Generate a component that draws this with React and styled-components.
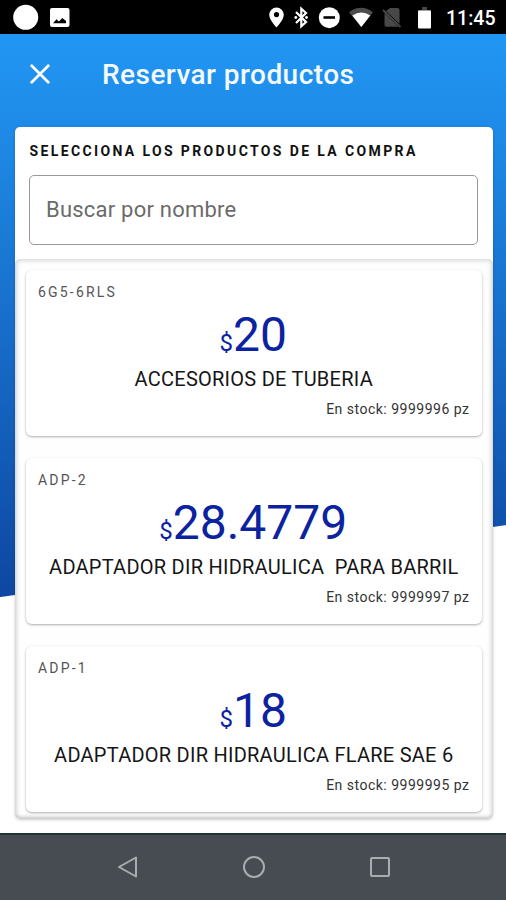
import React from "react";
import styled, { createGlobalStyle } from "styled-components";

const GlobalStyle = createGlobalStyle`
  * {
    box-sizing: border-box;
  }
  body {
    margin: 0;
    background: #fff;
    font-family: Roboto, "Noto Sans", sans-serif;
  }
  h1, h2, p {
    margin: 0;
  }
`;

const Screen = styled.div`
  display: flex;
  flex-direction: column;
  width: 506px;
  height: 900px;
  overflow: hidden;
`;

const StatusBar = styled.div`
  display: flex;
  align-items: center;
  justify-content: space-between;
  height: 34px;
  padding: 0 10px 0 13px;
  background: #000;
  color: #fff;
  svg {
    display: block;
  }
`;

const StatusGroup = styled.div`
  display: flex;
  align-items: center;
`;

const Clock = styled.span`
  width: 50px;
  margin-left: 13px;
  padding-top: 3px;
  font-size: 19.5px;
  font-weight: 500;
  line-height: 34px;
  white-space: nowrap;
`;

// slanted white bottom over the blue gradient
const Main = styled.main`
  display: flex;
  flex-direction: column;
  height: 799px;
  background: linear-gradient(171.9deg, transparent 557px, #fff 558px),
    linear-gradient(#2196f3 0, #1e88e5 110px, #0d47a1 563px);
`;

const Header = styled.header`
  display: flex;
  align-items: center;
  height: 93px;
  padding: 0 0 13px 30px;
  gap: 52px;
`;

const HeaderTitle = styled.h1`
  padding-top: 2px;
  color: #f4faff;
  font-size: 28px;
  font-weight: 500;
  line-height: 40px;
  letter-spacing: 0.45px;
`;

const Panel = styled.section`
  display: flex;
  flex-direction: column;
  width: 478px;
  height: 692px;
  margin-left: 14.5px;
  border-radius: 5px;
  background: #fff;
  overflow: hidden;
  box-shadow: 0 1px 3px rgba(0, 0, 0, 0.2);
`;

const SearchArea = styled.div`
  height: 132px;
  padding: 15px 14.5px 0;
`;

const SearchLabel = styled.h2`
  padding-left: 0.5px;
  font-size: 14px;
  font-weight: 700;
  line-height: 18px;
  letter-spacing: 2.37px;
  color: #111;
  white-space: nowrap;
`;

const SearchInput = styled.input`
  display: block;
  width: 449px;
  height: 70px;
  margin-top: 15px;
  padding: 0 16px 1px;
  border: 1px solid #999;
  border-radius: 5px;
  background: #fff;
  font-family: inherit;
  font-size: 22px;
  letter-spacing: 0.22px;
  outline: none;
  &::placeholder {
    color: #6b6b6b;
    opacity: 1;
  }
`;

const List = styled.div`
  display: flex;
  flex-direction: column;
  gap: 21px;
  height: 560px;
  padding: 11px 11px 0;
  border-radius: 5px;
  background: #fefefe;
  box-shadow: inset 0 -2px 3px rgba(0, 0, 0, 0.1),
    inset 0 0 4px 2px rgba(0, 0, 0, 0.14);
`;

const Card = styled.article`
  height: 166px;
  padding: 13px 12px 0 12.5px;
  border-radius: 6px;
  background: #fff;
  box-shadow: 0 1px 2.5px rgba(0, 0, 0, 0.32);
  & + & {
    margin-top: 1px;
  }
`;

const Code = styled.p`
  font-size: 14px;
  line-height: 18px;
  letter-spacing: 2.2px;
  color: #555;
`;

const Price = styled.p`
  height: 48px;
  margin: 10px 1px 0 0;
  font-size: 48px;
  line-height: 48px;
  color: #0b23a0;
  text-align: center;
  small {
    font-size: 24px;
    line-height: 1;
  }
`;

const Name = styled.p`
  margin-top: 8px;
  font-size: 20px;
  line-height: 24px;
  letter-spacing: 0.25px;
  color: #151515;
  text-align: center;
  white-space: pre;
`;

const Stock = styled.p`
  margin-top: 9px;
  font-size: 14px;
  line-height: 18px;
  letter-spacing: 0.5px;
  color: #333;
  text-align: right;
`;

const NavBar = styled.nav`
  display: flex;
  align-items: center;
  justify-content: center;
  gap: 102px;
  height: 67px;
  padding: 0 0 2px 1px;
  border-top: 2px solid #1d3434;
  background: #464c51;
`;

const products = [
  { code: "6G5-6RLS", price: "20", name: "ACCESORIOS DE TUBERIA", stock: 9999996 },
  { code: "ADP-2", price: "28.4779", name: "ADAPTADOR DIR HIDRAULICA  PARA BARRIL", stock: 9999997 },
  { code: "ADP-1", price: "18", name: "ADAPTADOR DIR HIDRAULICA FLARE SAE 6", stock: 9999995 },
];

function NotificationIcons() {
  return (
    <svg width="57" height="34" viewBox="13 0 57 34" fill="#fff">
      <circle cx="25.7" cy="17.3" r="12.5" />
      <path
        fillRule="evenodd"
        d="M52 8h15.500a2 2 0 0 1 2 2v15a2 2 0 0 1-2 2H52a2 2 0 0 1-2-2V10a2 2 0 0 1 2-2zM53 23.300h13v-2.300l-3.800-3-3.200 3.600-2.500-2.300z"
      />
    </svg>
  );
}

function SystemIcons() {
  return (
    <svg width="165" height="34" viewBox="268 0 165 34" fill="#fff">
      <path
        fillRule="evenodd"
        d="M276.500 7.500a7.300 7.300 0 0 0-7.300 7.300c0 5.200 7.300 12.700 7.300 12.700s7.300-7.500 7.300-12.700a7.300 7.300 0 0 0-7.300-7.300zM276.500 12a2.600 2.600 0 1 1 0 5.200 2.600 2.600 0 0 1 0-5.200z"
      />
      <path
        d="M296 12l10 10-4.700 4.200V8.800l4.700 4.200-10 10"
        fill="none"
        stroke="#fff"
        strokeWidth="2.200"
      />
      <circle cx="295.800" cy="17.500" r="1.400" />
      <circle cx="306.500" cy="17.500" r="1.400" />
      <circle cx="329.300" cy="17.700" r="10.500" />
      <rect x="323.500" y="16.200" width="11.500" height="2.600" fill="#000" />
      <path d="M349 12.200Q361 3.500 373 12.200L361.300 27z" fill="#4c4c4c" />
      <path d="M352.300 15.500Q361.300 9.300 370.300 15.500L361.300 27z" />
      <path d="M390 8h7.500a2 2 0 0 1 2 2v13.800L386 11z" fill="#484848" />
      <path d="M384.500 13v12a1.700 1.700 0 0 0 1.700 1.700H398.500z" fill="#484848" />
      <path d="M383 10l17.500 17" stroke="#484848" strokeWidth="1.800" />
      <path d="M422 7h5v3h4v3h-13V10h4z" fill="#444" />
      <rect x="418" y="10.500" width="13" height="18" rx="1" />
    </svg>
  );
}

function CloseIcon() {
  return (
    <svg width="20" height="20" viewBox="0 0 20 20" stroke="#fff" strokeWidth="2.700">
      <path d="M.900.900l18.200 18.200M19.100.900L.900 19.100" />
    </svg>
  );
}

function ProductCard({ code, price, name, stock }) {
  return (
    <Card>
      <Code>{code}</Code>
      <Price>
        <small>$</small>
        {price}
      </Price>
      <Name>{name}</Name>
      <Stock>En stock: {stock} pz</Stock>
    </Card>
  );
}

export default function App() {
  return (
    <>
      <GlobalStyle />
      <Screen>
        <StatusBar>
          <NotificationIcons />
          <StatusGroup>
            <SystemIcons />
            <Clock>11:45</Clock>
          </StatusGroup>
        </StatusBar>
        <Main>
          <Header>
            <CloseIcon />
            <HeaderTitle>Reservar productos</HeaderTitle>
          </Header>
          <Panel>
            <SearchArea>
              <SearchLabel>SELECCIONA LOS PRODUCTOS DE LA COMPRA</SearchLabel>
              <SearchInput placeholder="Buscar por nombre" />
            </SearchArea>
            <List>
              {products.map((product) => (
                <ProductCard key={product.code} {...product} />
              ))}
            </List>
          </Panel>
        </Main>
        <NavBar>
          <svg width="24" height="24" fill="none" stroke="#a9adae" strokeWidth="2">
            <path d="M20 2.500v19L3 12z" strokeLinejoin="round" />
          </svg>
          <svg width="24" height="24" fill="none" stroke="#a9adae" strokeWidth="2">
            <circle cx="12" cy="12" r="10" />
          </svg>
          <svg width="24" height="24" fill="none" stroke="#a9adae" strokeWidth="2">
            <rect x="3" y="3" width="18" height="18" rx="1" />
          </svg>
        </NavBar>
      </Screen>
    </>
  );
}
